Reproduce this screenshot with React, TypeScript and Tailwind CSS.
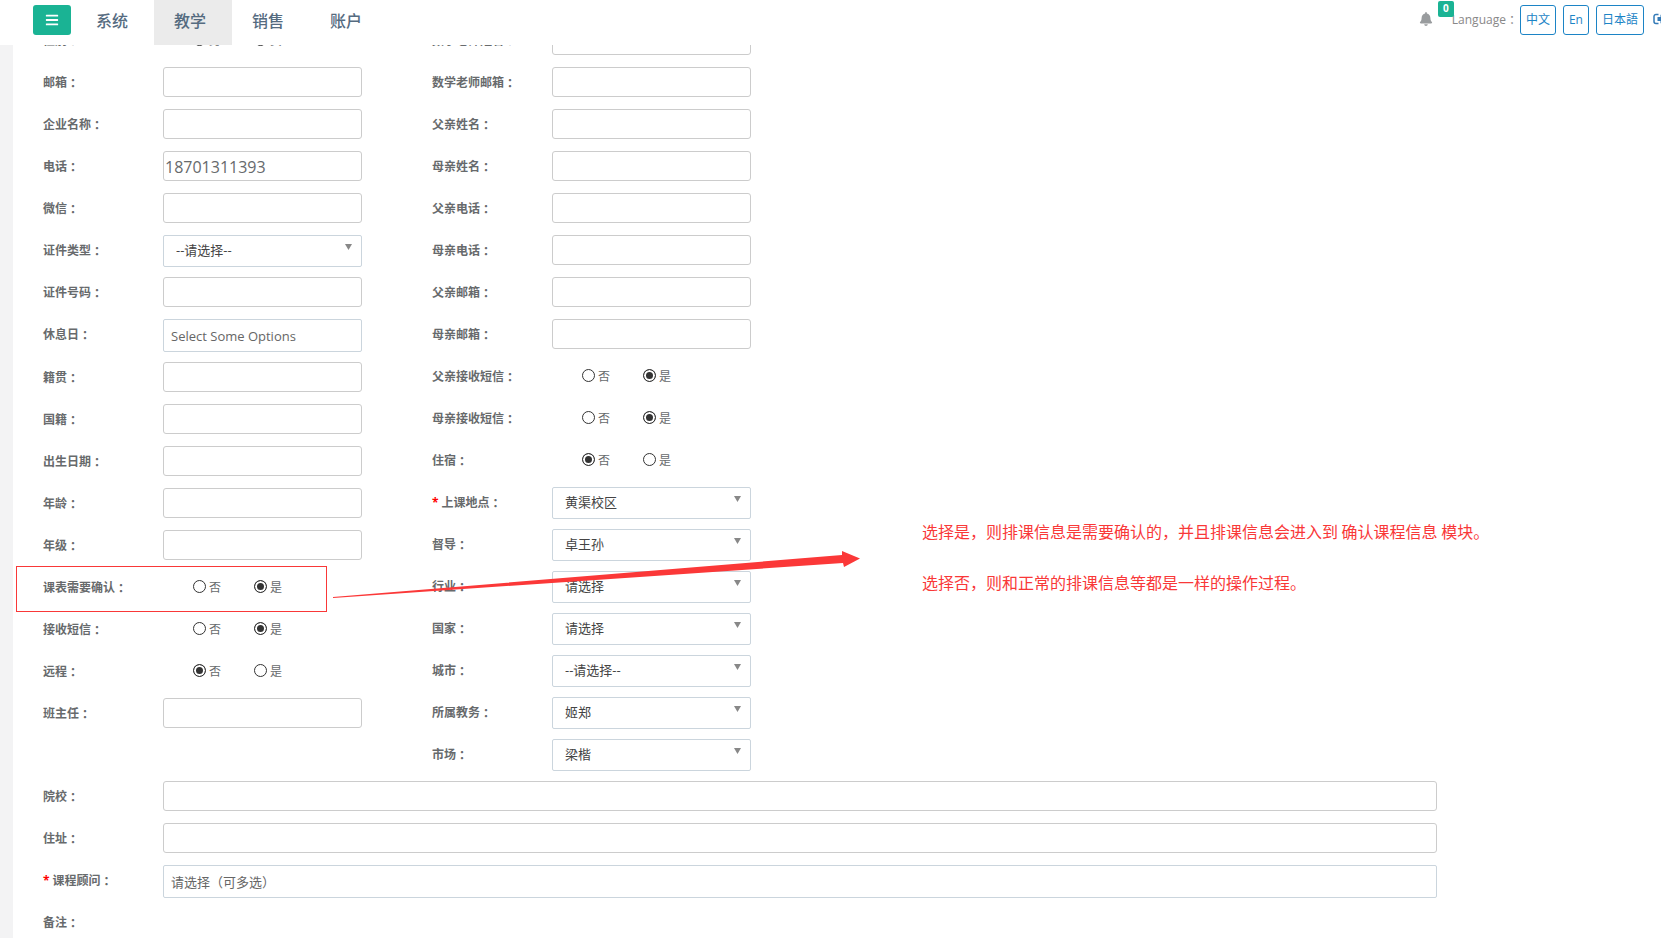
import { useState } from "react";
import type { ReactNode } from "react";
import { FaBars, FaBell } from "react-icons/fa";

type Field =
  | { kind: "text"; name: string; label: string; value?: string }
  | { kind: "select"; name: string; label: string; value: string; required?: boolean }
  | { kind: "multi"; name: string; label: string; placeholder: string; required?: boolean }
  | { kind: "radio"; name: string; label: string; options: string[]; value: string; marked?: boolean };

const NAV = ["系统", "教学", "销售", "账户"];
const LANGUAGES = ["中文", "En", "日本語"];
const YES_NO = ["否", "是"];

const LEFT_FIELDS: Field[] = [
  { kind: "radio", name: "gender", label: "性别", options: ["男", "女"], value: "" },
  { kind: "text", name: "email", label: "邮箱" },
  { kind: "text", name: "company", label: "企业名称" },
  { kind: "text", name: "phone", label: "电话", value: "18701311393" },
  { kind: "text", name: "wechat", label: "微信" },
  { kind: "select", name: "idType", label: "证件类型", value: "--请选择--" },
  { kind: "text", name: "idNumber", label: "证件号码" },
  { kind: "multi", name: "restDays", label: "休息日", placeholder: "Select Some Options" },
  { kind: "text", name: "nativePlace", label: "籍贯" },
  { kind: "text", name: "nationality", label: "国籍" },
  { kind: "text", name: "birthday", label: "出生日期" },
  { kind: "text", name: "age", label: "年龄" },
  { kind: "text", name: "grade", label: "年级" },
  { kind: "radio", name: "confirm", label: "课表需要确认", options: YES_NO, value: "是", marked: true },
  { kind: "radio", name: "sms", label: "接收短信", options: YES_NO, value: "是" },
  { kind: "radio", name: "remote", label: "远程", options: YES_NO, value: "否" },
  { kind: "text", name: "headTeacher", label: "班主任" },
];

const RIGHT_FIELDS: Field[] = [
  { kind: "text", name: "mathTeacher", label: "数学老师姓名" },
  { kind: "text", name: "mathEmail", label: "数学老师邮箱" },
  { kind: "text", name: "fatherName", label: "父亲姓名" },
  { kind: "text", name: "motherName", label: "母亲姓名" },
  { kind: "text", name: "fatherPhone", label: "父亲电话" },
  { kind: "text", name: "motherPhone", label: "母亲电话" },
  { kind: "text", name: "fatherEmail", label: "父亲邮箱" },
  { kind: "text", name: "motherEmail", label: "母亲邮箱" },
  { kind: "radio", name: "fatherSms", label: "父亲接收短信", options: YES_NO, value: "是" },
  { kind: "radio", name: "motherSms", label: "母亲接收短信", options: YES_NO, value: "是" },
  { kind: "radio", name: "boarding", label: "住宿", options: YES_NO, value: "否" },
  { kind: "select", name: "campus", label: "上课地点", value: "黄渠校区", required: true },
  { kind: "select", name: "supervisor", label: "督导", value: "卓王孙" },
  { kind: "select", name: "industry", label: "行业", value: "请选择" },
  { kind: "select", name: "country", label: "国家", value: "请选择" },
  { kind: "select", name: "city", label: "城市", value: "--请选择--" },
  { kind: "select", name: "registrar", label: "所属教务", value: "姬郑" },
  { kind: "select", name: "market", label: "市场", value: "梁楷" },
];

const WIDE_FIELDS: Field[] = [
  { kind: "text", name: "school", label: "院校" },
  { kind: "text", name: "address", label: "住址" },
  { kind: "multi", name: "advisor", label: "课程顾问", placeholder: "请选择（可多选）", required: true },
];

function LabelText({ text, required }: { text: string; required?: boolean }) {
  return (
    <>
      {required && <span className="mr-[3px] text-[#f00]">*</span>}
      {text}
      <span lang="zh-TW" className="font-['Noto_Sans_CJK_TC',sans-serif]">：</span>
    </>
  );
}

function Control({ field }: { field: Field }) {
  if (field.kind === "text") {
    return (
      <input
        id={field.name}
        type="text"
        defaultValue={field.value}
        className="block h-[30px] w-full rounded-[3px] border border-[#ccc] bg-white px-px pt-0.5 text-base text-[#676a6c] outline-none focus:border-[#1ab394]"
      />
    );
  }
  if (field.kind === "multi") {
    return (
      <input
        id={field.name}
        type="text"
        placeholder={field.placeholder}
        className="block h-[33px] w-full rounded-xs border border-[#cbd5dd] bg-white px-[7px] text-[13px] outline-none placeholder:text-[#666]"
      />
    );
  }
  if (field.kind === "select") {
    return (
      <div className="relative">
        <select
          id={field.name}
          className="block h-8 w-full appearance-none rounded-xs border border-[#cbd5dd] bg-white px-3 text-[13px] text-[#444] outline-none"
        >
          <option>{field.value}</option>
        </select>
        <svg
          viewBox="0 0 7 6"
          className="pointer-events-none absolute top-[9px] right-[10px] h-1.5 w-[7px] fill-[#888]"
        >
          <path d="M0 0h7L3.5 6z" />
        </svg>
      </div>
    );
  }
  return (
    <div className="flex h-7 items-center gap-[33px] pl-[30px]">
      {field.options.map((option) => (
        <label key={option} className="flex items-center gap-[3px] text-xs">
          <input
            type="radio"
            name={field.name}
            value={option}
            defaultChecked={option === field.value}
            className="size-[13px] appearance-none rounded-full border border-[#333] bg-white checked:bg-[#333] checked:shadow-[inset_0_0_0_2px_white]"
          />
          <span className="pt-1">{option}</span>
        </label>
      ))}
    </div>
  );
}

// Red frame round the row, with an arrow that leads to the notes
function Callout() {
  return (
    <>
      <div className="pointer-events-none absolute -top-1.5 -left-[27px] h-[46px] w-[311px] border border-[#f93838]" />
      <svg
        viewBox="0 0 528 48"
        className="pointer-events-none absolute -top-[21px] left-[290px] z-10 h-12 w-[528px] fill-[#fb3838]"
      >
        <path d="M0 46L509 4L509 0L527 7.5L511 16L510 12L0 47z" />
      </svg>
    </>
  );
}

function Row({ field }: { field: Field }) {
  const isRadio = field.kind === "radio";
  const required = (field.kind === "select" || field.kind === "multi") && field.required;
  const tall = field.kind === "select" || field.kind === "multi";
  const caption: ReactNode = <LabelText text={field.label} required={required} />;
  const captionClass = "flex h-[30px] w-[120px] shrink-0 items-center pt-0.5 text-xs font-bold";

  return (
    <div
      role={isRadio ? "radiogroup" : undefined}
      aria-labelledby={isRadio ? `${field.name}-label` : undefined}
      className={`relative flex items-start ${tall ? "mb-2.5" : "mb-3"}`}
    >
      {isRadio ? (
        <span id={`${field.name}-label`} className={captionClass}>{caption}</span>
      ) : (
        <label htmlFor={field.name} className={captionClass}>{caption}</label>
      )}
      <div className="min-w-0 flex-1">
        <Control field={field} />
      </div>
      {field.kind === "radio" && field.marked && <Callout />}
    </div>
  );
}

function Header() {
  const [active, setActive] = useState("教学");

  return (
    <header className="fixed inset-x-0 top-0 z-20 flex h-[45px] items-start overflow-hidden bg-white pl-[33px]">
      <button
        type="button"
        aria-label="Menu"
        className="mt-[5px] flex h-[30px] w-[38px] items-center justify-center rounded-[3px] bg-[#1ab394] text-white"
      >
        <FaBars size={14} />
      </button>
      <nav className="ml-[5px] flex h-full">
        {NAV.map((item) => (
          <a
            key={item}
            href="#"
            onClick={() => setActive(item)}
            className={`flex h-full items-center pr-[26px] pb-1 pl-5 text-base font-medium text-[#556b80] ${
              item === active ? "bg-[#ebebeb]" : ""
            }`}
          >
            {item}
          </a>
        ))}
      </nav>
      <div className="ml-auto flex items-start pt-[5px] text-xs">
        <a href="#" aria-label="Notifications" className="relative mt-[7px] mr-[19px] text-[#999c9e]">
          <FaBell size={14} />
          <span className="absolute -top-[11px] left-[19px] flex size-4 items-center justify-center rounded-xs bg-[#1ab394] text-[10px] font-bold text-white">
            0
          </span>
        </a>
        <span className="flex h-[30px] items-center text-[#888]">
          Language<span lang="zh-TW" className="font-['Noto_Sans_CJK_TC',sans-serif]">：</span>
        </span>
        <div className="ml-0.5 flex gap-[7px]">
          {LANGUAGES.map((lang) => (
            <button
              key={lang}
              type="button"
              className="h-[30px] rounded-[3px] border border-[#1c84c6] px-[5px] text-xs text-[#1c84c6]"
            >
              {lang}
            </button>
          ))}
        </div>
        <a href="#" aria-label="Log out" className="mt-2 ml-[9px] w-2 overflow-hidden text-[#337ab7]">
          <svg viewBox="0 0 14 12" className="h-3 w-3.5" fill="none" stroke="currentColor" strokeWidth="1.5">
            <path d="M5.5 1.5H3a2 2 0 0 0-2 2v5a2 2 0 0 0 2 2h2.5" />
            <path d="M4.5 4h3V1.5L13 6l-5.5 4.5V8h-3z" fill="currentColor" stroke="none" />
          </svg>
        </a>
      </div>
    </header>
  );
}

export default function App() {
  return (
    <div className="min-h-screen bg-[#f3f3f4] pl-[13px] font-['Open_Sans','Noto_Sans_CJK_SC',sans-serif] text-[#676a6c]">
      <Header />
      <main className="min-h-screen bg-white pt-[25px] pl-[30px]">
        <form>
          <div className="flex">
            <div className="w-[319px] shrink-0">
              {LEFT_FIELDS.map((field) => (
                <Row key={field.name} field={field} />
              ))}
            </div>
            <div className="ml-[70px] w-[319px] shrink-0">
              {RIGHT_FIELDS.map((field) => (
                <Row key={field.name} field={field} />
              ))}
            </div>
            <div className="ml-[171px] flex flex-col gap-[27px] pt-[494px] font-['Noto_Sans_CJK_SC',sans-serif] text-base leading-6 text-[#f93838]">
              <p>选择是，则排课信息是需要确认的，并且排课信息会进入到 确认课程信息 模块。</p>
              <p>选择否，则和正常的排课信息等都是一样的操作过程。</p>
            </div>
          </div>
          <div className="mr-56">
            {WIDE_FIELDS.map((field) => (
              <Row key={field.name} field={field} />
            ))}
          </div>
          <div className="flex h-[30px] items-center text-xs font-bold">
            <LabelText text="备注" />
          </div>
        </form>
      </main>
    </div>
  );
}
